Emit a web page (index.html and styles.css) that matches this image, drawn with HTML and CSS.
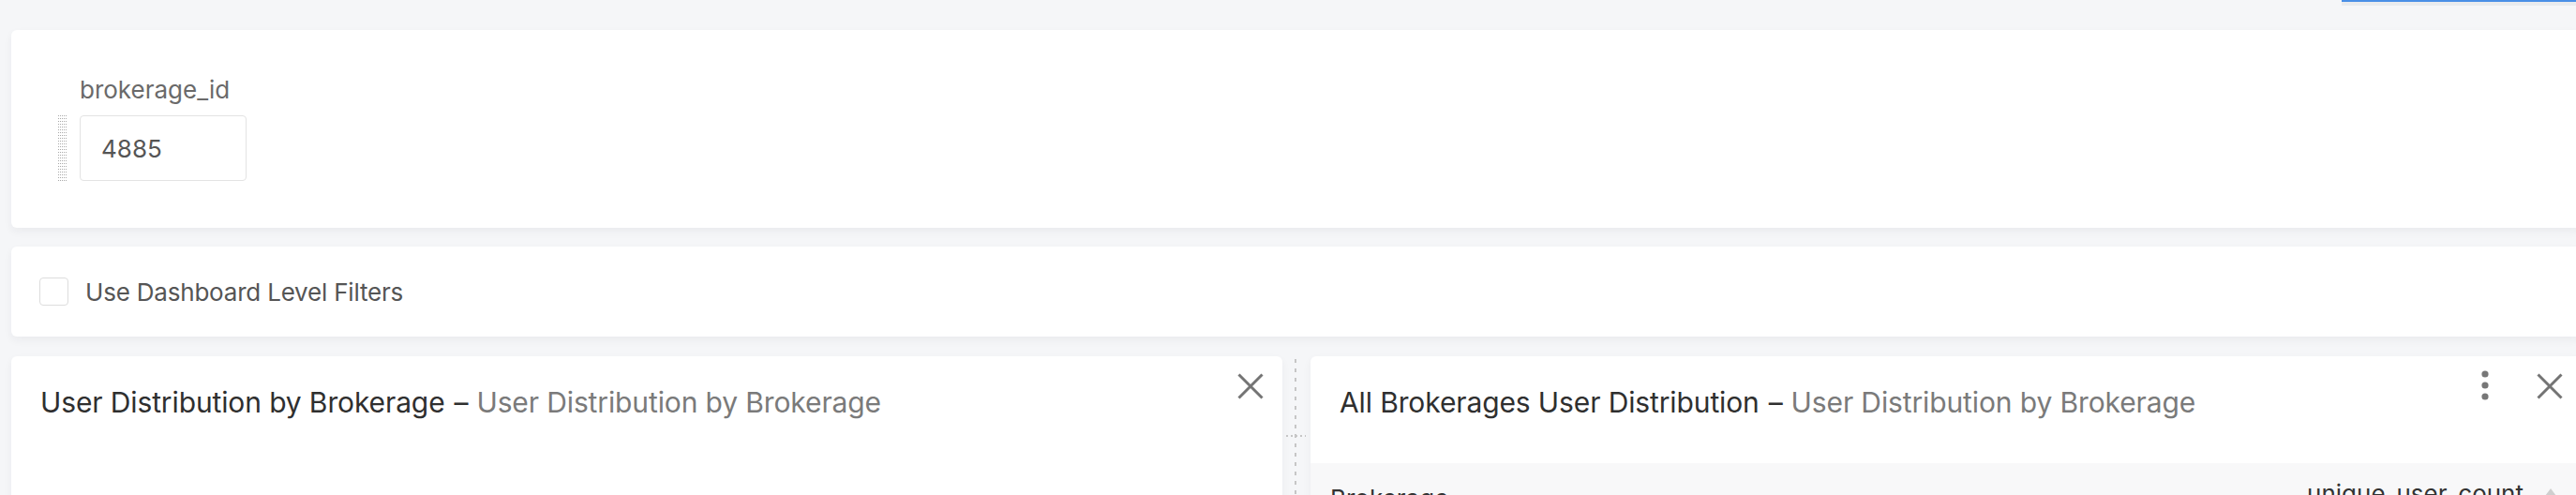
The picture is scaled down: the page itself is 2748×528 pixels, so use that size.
FILE: index.html
```html
<!DOCTYPE html>
<html lang="en">
<head>
<meta charset="utf-8">
<title>Dashboard</title>
<link rel="stylesheet" href="styles.css">
</head>
<body>
<div class="topbar"><div class="tab-indicator"></div></div>
<main class="stack">
  <section class="card filters">
    <div class="filter">
      <div class="drag-handle">
        <svg width="10" height="70" viewBox="0 0 10 70">
          <defs>
            <pattern id="dots" width="2" height="3" patternUnits="userSpaceOnUse">
              <rect width="1" height="1" fill="#a9a9a9"/>
            </pattern>
          </defs>
          <rect width="10" height="70" fill="url(#dots)"/>
        </svg>
      </div>
      <div class="field">
        <label class="field-label">brokerage_id</label>
        <div class="input">4885</div>
      </div>
    </div>
  </section>

  <section class="card options">
    <span class="checkbox"></span>
    <span class="option-label">Use Dashboard Level Filters</span>
  </section>

  <div class="charts">
    <article class="card chart">
      <header class="chart-head">
        <h2 class="chart-title">User Distribution by Brokerage<span class="dash">–</span><span class="sub">User Distribution by Brokerage</span></h2>
        <div class="actions">
          <svg class="icon-close" viewBox="0 0 28 28"><path d="M1.5 1.5L26.5 26.5M26.5 1.5L1.5 26.5" stroke="#747474" stroke-width="3" fill="none"/></svg>
        </div>
      </header>
    </article>

    <div class="divider"></div>

    <article class="card chart">
      <header class="chart-head tall">
        <h2 class="chart-title">All Brokerages User Distribution<span class="dash">–</span><span class="sub">User Distribution by Brokerage</span></h2>
        <div class="actions">
          <svg class="icon-kebab" viewBox="0 0 8 32"><circle cx="4" cy="4" r="3.6" fill="#777"/><circle cx="4" cy="16" r="3.6" fill="#777"/><circle cx="4" cy="28" r="3.6" fill="#777"/></svg>
          <svg class="icon-close" viewBox="0 0 28 28"><path d="M1.5 1.5L26.5 26.5M26.5 1.5L1.5 26.5" stroke="#747474" stroke-width="3" fill="none"/></svg>
        </div>
      </header>
      <div class="table-head">
        <span>Brokerage</span>
        <span class="num">unique_user_count <svg class="sort" viewBox="0 0 18 12"><path d="M9 0L18 12H0Z" fill="#cfcfcf"/></svg></span>
      </div>
    </article>
  </div>
</main>
</body>
</html>
```

FILE: styles.css
```css
html, body {
  margin: 0;
  padding: 0;
}

body {
  width: 2748px;
  height: 528px;
  overflow: hidden;
  background: #f5f6f8;
  font-family: Inter, "Noto Sans", "Liberation Sans", sans-serif;
}

.topbar {
  height: 32px;
  display: flex;
  justify-content: flex-end;
}

.tab-indicator {
  width: 250px;
  height: 2px;
  background: #4a8fe6;
  border-bottom: 4px solid #e9ebee;
}

.stack {
  display: flex;
  flex-direction: column;
  gap: 20px;
  padding-left: 12px;
  margin-right: -6px;
}

.card {
  background: #ffffff;
  border-radius: 6px;
  box-shadow: 0 4px 10px rgba(30, 40, 60, 0.05);
}

/* filter card */
.filters {
  padding: 48px 0 50px 50px;
}

.filter {
  display: flex;
  align-items: flex-end;
  gap: 13px;
}

.drag-handle {
  width: 10px;
  height: 70px;
}

.drag-handle svg {
  display: block;
}

.field-label {
  display: block;
  font-size: 26px;
  line-height: 31px;
  color: #6a6a6a;
  margin-bottom: 12px;
}

.input {
  width: 178px;
  height: 70px;
  box-sizing: border-box;
  border: 1.5px solid #e3e3e3;
  border-radius: 4px;
  padding-left: 22px;
  display: flex;
  align-items: center;
  font-size: 26px;
  color: #555555;
}

/* options card */
.options {
  height: 96px;
  box-sizing: border-box;
  display: flex;
  align-items: center;
  gap: 18px;
  padding-left: 30px;
}

.checkbox {
  width: 31px;
  height: 30px;
  box-sizing: border-box;
  border: 1.5px solid #dddddd;
  border-radius: 4px;
}

.option-label {
  font-size: 26px;
  color: #555555;
  letter-spacing: -0.2px;
}

/* charts */
.charts {
  display: grid;
  grid-template-columns: 1356px 30px 1356px;
  margin-top: 1px;
}

.chart {
  height: 420px;
  overflow: hidden;
}

.divider {
  position: relative;
  background: repeating-linear-gradient(to bottom, transparent 0 3px, #c6c6c6 3px 7px, transparent 7px 10px) no-repeat 13px 0 / 2px 100%;
}

.divider::after {
  content: "";
  position: absolute;
  left: 4px;
  right: 5px;
  top: 84px;
  height: 2px;
  background: repeating-linear-gradient(to right, #c6c6c6 0 2px, transparent 2px 5px);
}

.chart-head {
  display: flex;
  align-items: flex-start;
  padding: 18px 20px 0 31px;
  box-sizing: border-box;
}

.chart-head.tall {
  height: 114px;
}

.chart-title {
  flex: 1;
  margin: 13px 0 0;
  font-size: 30px;
  font-weight: 400;
  line-height: 36px;
  color: #2f2f2f;
  white-space: nowrap;
  letter-spacing: -0.12px;
}

.dash {
  margin: 0 9px 0 10px;
}

.sub {
  color: #7a7a7a;
}

.actions {
  display: flex;
  align-items: flex-start;
}

.icon-close {
  width: 28px;
  height: 28px;
  display: block;
}

.icon-kebab {
  width: 8px;
  height: 32px;
  margin-top: -3px;
  margin-right: 51px;
  display: block;
}

.table-head {
  background: #f8f8f9;
  display: flex;
  justify-content: space-between;
  align-items: flex-start;
  padding: 22px 24px 0 21px;
  height: 200px;
  font-size: 26px;
  line-height: 31px;
  color: #333333;
}

.num {
  display: flex;
  align-items: center;
  gap: 20px;
  margin-top: -5px;
}

.sort {
  width: 18px;
  height: 12px;
}
```
